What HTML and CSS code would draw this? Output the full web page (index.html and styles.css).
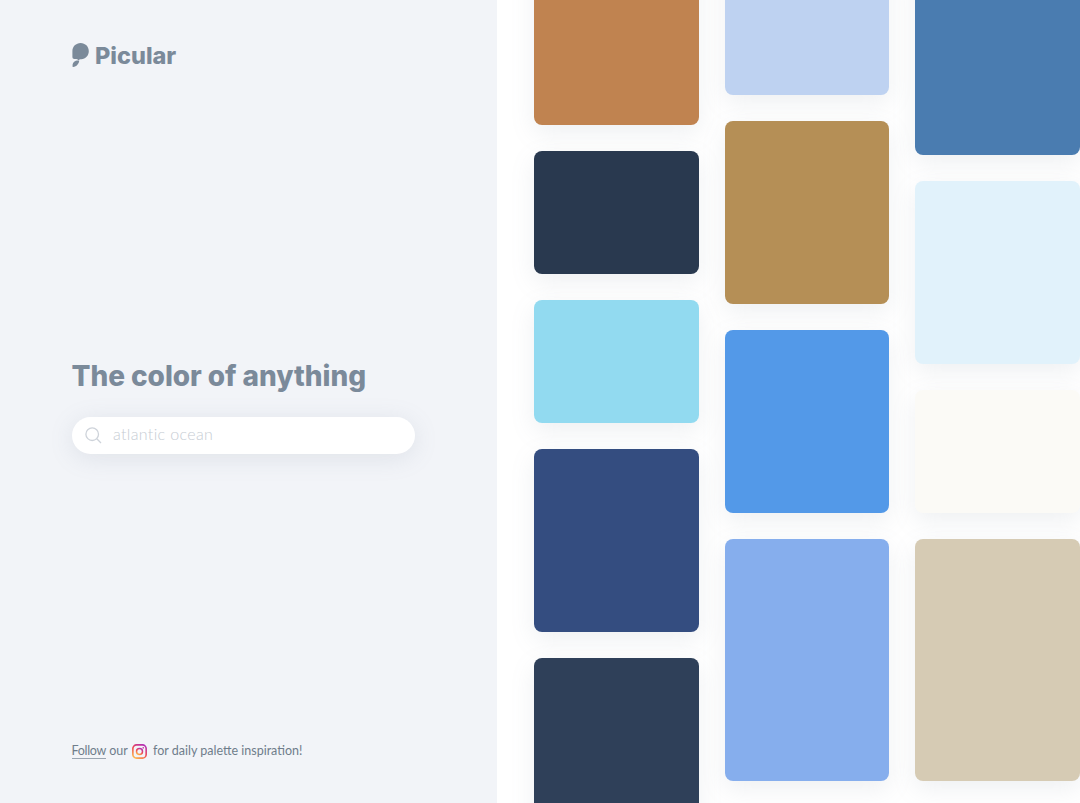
FILE: index.html
```html
<!DOCTYPE html>
<html lang="en">
<head>
    <meta charset="UTF-8">
    <title>Picular</title>
    <link rel="stylesheet" href="styles.css">
</head>
<body>
    <div class="page">
        <div class="sidebar">
            <div class="logo">
                <svg class="logo-mark" width="17" height="24" viewBox="0 0 17 24">
                    <path d="M8.6 0C13.2 0 16.8 3.6 16.8 8.2C16.8 12.6 13.4 16 9.4 16.2C8 16.3 7.2 16.6 6.6 17.2C5.8 16.2 4.4 15.8 2.8 15.9C1.2 16 .4 15.4 .4 14V8.2C.4 3.6 4 0 8.6 0Z"/>
                    <path d="M.6 23.8C.2 21.2 1.2 18.6 3.8 17.8C5 17.5 6.4 17.5 7.2 17.6C7.2 20.6 4.4 24 1.2 24C.9 24 .7 24 .6 23.8Z"/>
                </svg>
                <span class="logo-text">Picular</span>
            </div>

            <div class="hero">
                <h1>The color of anything</h1>
                <div class="search">
                    <svg class="search-icon" width="17" height="17" viewBox="0 0 17 17">
                        <circle cx="7.2" cy="7.2" r="6.3"/>
                        <path d="M11.8 11.8L16 16"/>
                    </svg>
                    <input type="text" placeholder="atlantic ocean">
                </div>
            </div>

            <p class="follow">
                <a href="#">Follow</a> our
                <svg class="insta" width="15" height="15" viewBox="0 0 16 16">
                    <defs>
                        <linearGradient id="instaGrad" x1="0.2" y1="1" x2="0.8" y2="0">
                            <stop offset="0" stop-color="#fdb44b"/>
                            <stop offset="0.5" stop-color="#f0474f"/>
                            <stop offset="1" stop-color="#b32fb5"/>
                        </linearGradient>
                    </defs>
                    <rect x="0.9" y="0.9" width="14.2" height="14.2" rx="4" fill="none" stroke="url(#instaGrad)" stroke-width="1.7"/>
                    <circle cx="8" cy="8" r="3.2" fill="none" stroke="url(#instaGrad)" stroke-width="1.6"/>
                    <circle cx="12" cy="4" r="0.9" fill="#c9349c"/>
                </svg>
                for daily palette inspiration!
            </p>
        </div>

        <div class="palette">
            <div class="column">
                <div class="swatch tall" style="background: #c08350; margin-top: -58.5px;"></div>
                <div class="swatch short" style="background: #29394f;"></div>
                <div class="swatch short" style="background: #92daf0;"></div>
                <div class="swatch tall" style="background: #344d80;"></div>
                <div class="swatch tall" style="background: #2f4059;"></div>
            </div>
            <div class="column">
                <div class="swatch tall" style="background: #bed2f1; margin-top: -88px;"></div>
                <div class="swatch tall" style="background: #b58f56;"></div>
                <div class="swatch tall" style="background: #5399e8;"></div>
                <div class="swatch huge" style="background: #86aeed;"></div>
            </div>
            <div class="column">
                <div class="swatch tall" style="background: #4a7cb0; margin-top: -28.5px;"></div>
                <div class="swatch tall" style="background: #e1f2fb;"></div>
                <div class="swatch short" style="background: #fbfaf6;"></div>
                <div class="swatch huge" style="background: #d6cbb4;"></div>
            </div>
        </div>
    </div>
</body>
</html>
```

FILE: styles.css
```css
* {
    box-sizing: border-box;
}

html, body {
    margin: 0;
    height: 100%;
    overflow: hidden;
}

body {
    font-family: "Inter", "Liberation Sans", sans-serif;
    background-color: #fff;
}

.page {
    display: flex;
    height: 803px;
}

.sidebar {
    width: 497px;
    flex-shrink: 0;
    padding: 43px 0 0 71.5px;
    background-color: #f2f4f8;
    display: flex;
    flex-direction: column;
}

.logo {
    display: flex;
    align-items: center;
    gap: 6.5px;
    height: 24px;
}

.logo-mark {
    fill: #7b8a9a;
}

.logo-text {
    font-size: 23.5px;
    font-weight: 800;
    color: #7b8a9a;
}

.hero {
    margin-top: 291px;
}

h1 {
    margin: 0;
    font-size: 28px;
    line-height: 36px;
    font-weight: 800;
    color: #7b8a9a;
    letter-spacing: -0.05px;
}

.search {
    margin-top: 23px;
    width: 343.5px;
    height: 37px;
    padding-left: 13.5px;
    display: flex;
    align-items: center;
    gap: 11px;
    background-color: #fff;
    border-radius: 19px;
    box-shadow: 0 4px 24px rgba(123, 138, 154, 0.16);
}

.search-icon {
    flex-shrink: 0;
    fill: none;
    stroke: #ced3da;
    stroke-width: 1.3;
}

.search input {
    flex: 1;
    min-width: 0;
    padding: 0 0 5px;
    border: none;
    outline: none;
    background: none;
    font-family: "Lato", sans-serif;
    font-size: 16px;
    font-weight: 300;
    letter-spacing: 0.35px;
    color: #7b8a9a;
}

.search input::placeholder {
    color: #c6ccd3;
    opacity: 1;
}

.follow {
    margin: 289px 0 0;
    font-family: "Lato", sans-serif;
    font-size: 12.5px;
    line-height: 16px;
    color: #6f7d8b;
}

.follow a {
    color: #6f7d8b;
    text-decoration: none;
    letter-spacing: -0.3px;
    border-bottom: 1px solid #9aa5b1;
}

.insta {
    margin: 0 3px 0 1px;
    vertical-align: -4px;
}

.palette {
    flex: 1;
    padding-left: 37px;
    display: flex;
    gap: 26px;
    height: 803px;
    overflow: hidden;
}

.column {
    width: 164.5px;
    flex-shrink: 0;
    display: flex;
    flex-direction: column;
    gap: 26px;
}

.swatch {
    flex-shrink: 0;
    border-radius: 8px;
    box-shadow: 0 8px 24px rgba(123, 138, 154, 0.13);
}

.short {
    height: 123px;
}

.tall {
    height: 183px;
}

.huge {
    height: 242px;
}
```
